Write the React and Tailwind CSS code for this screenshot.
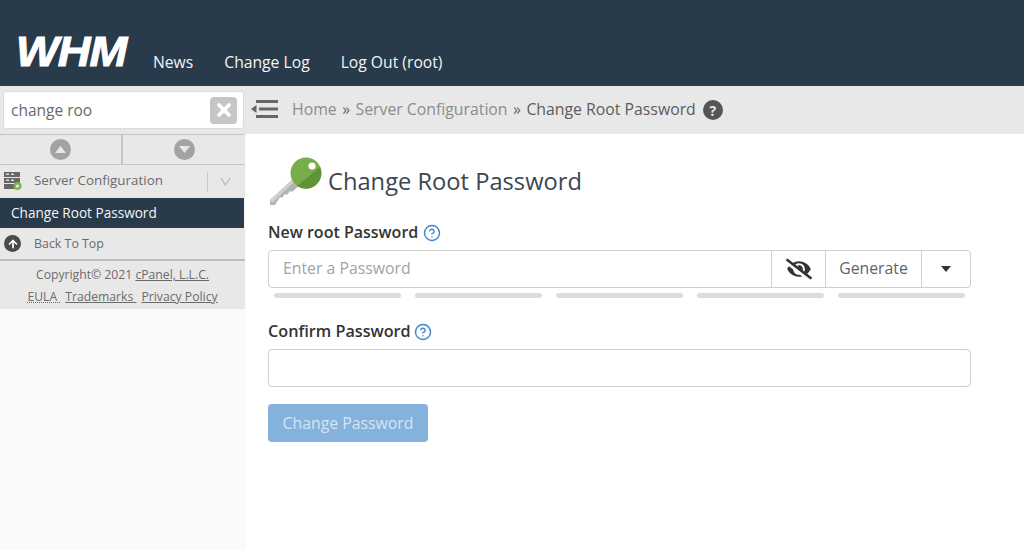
import React from 'react';
import { X, ArrowUp, HelpCircle } from 'lucide-react';
import { FaEyeSlash } from 'react-icons/fa';

const font = { fontFamily: '"Open Sans", "Liberation Sans", sans-serif' };

function KeyIcon() {
  return (
    <svg width="56" height="52" viewBox="0 0 56 52" className="shrink-0">
      <path d="M2 44 L26 22 L32 29 L24 36 L22 35 L19 39 L17 38 L14 42 L12 41 L7 49 L2 49 Z" fill="#b3b3b3" />
      <path d="M2 44 L26 22 L28 24 L4 47 Z" fill="#d0d0d0" />
      <circle cx="38" cy="17" r="15.5" fill="#78ad4c" />
      <path d="M52 11 A15.5 15.5 0 0 1 29 30 Z" fill="#5f9336" />
      <circle cx="44" cy="10" r="3.6" fill="#fff" />
    </svg>
  );
}

function ServerIcon() {
  return (
    <svg width="18" height="19" viewBox="0 0 18 19">
      <rect x="0" y="0" width="16" height="5" fill="#666" />
      <rect x="0" y="6" width="16" height="5" fill="#666" />
      <rect x="0" y="12" width="16" height="5" fill="#666" />
      <rect x="2" y="1.5" width="3" height="1.5" fill="#ddd" />
      <rect x="7" y="1.5" width="3" height="1.5" fill="#ddd" />
      <rect x="2" y="7.5" width="3" height="1.5" fill="#ddd" />
      <rect x="7" y="7.5" width="3" height="1.5" fill="#ddd" />
      <circle cx="13.5" cy="14" r="4" fill="#7ab648" />
      <circle cx="13.5" cy="14" r="1.6" fill="#e8e8e8" />
    </svg>
  );
}

function Triangle({ up }) {
  return (
    <span className="w-[21px] h-[21px] rounded-full bg-[#a3a3a3] flex items-center justify-center">
      <svg width="11" height="7" viewBox="0 0 11 7">
        <path d={up ? 'M5.5 0 L11 7 L0 7 Z' : 'M0 0 L11 0 L5.5 7 Z'} fill="#e8e8e8" />
      </svg>
    </span>
  );
}

function HelpDot() {
  return <HelpCircle size={18} strokeWidth={1.9} className="text-[#3d86cc]" />;
}

export default function App() {
  return (
    <div className="w-[1024px] h-[550px] overflow-hidden bg-white flex flex-col" style={font}>
      {/* top bar */}
      <header className="h-[86px] bg-[#293a4a] flex items-end pl-[16px] pb-[12px] text-white">
        <span className="font-['Liberation_Sans'] font-bold italic text-[42px] leading-[38px] tracking-[-1px] w-[116px] mb-[3px] scale-x-[1.08] origin-left [-webkit-text-stroke:1px_white]">WHM</span>
        <nav className="flex gap-[31px] ml-[21px] text-[15.7px] leading-[24px] text-[#f2f5f7]">
          <span>News</span>
          <span>Change Log</span>
          <span>Log Out (root)</span>
        </nav>
      </header>

      <div className="flex flex-1 min-h-0">
        {/* sidebar */}
        <aside className="w-[246px] shrink-0 bg-[#fafafa] flex flex-col">
          <div className="h-[48px] bg-[#e8e8e8] pl-[3px] pr-[2px] pt-[5px]">
            <div className="h-[38px] bg-white border border-[#dcdcdc] rounded-[3px] flex items-center justify-between pl-[7px] pr-[6px]">
              <span className="text-[15.5px] text-[#6a6a6a] pt-[1px]">change roo</span>
              <span className="w-[27px] h-[27px] rounded-[4px] bg-[#c6c6c6] flex items-center justify-center">
                <X size={20} strokeWidth={4.5} className="text-white" />
              </span>
            </div>
          </div>
          <div className="w-[245px] h-[31px] flex bg-[#e8e8e8] border-t border-b border-[#c4c4c4]">
            <div className="w-[123px] flex items-center justify-center border-r-2 border-[#c4c4c4]"><Triangle up /></div>
            <div className="flex-1 flex items-center justify-center"><Triangle /></div>
          </div>
          <div className="w-[245px] h-[33px] bg-[#e8e8e8] flex items-center pl-[4px] text-[13.4px] text-[#6b6b6b]">
            <ServerIcon />
            <span className="ml-[12px] w-[173px] pb-[2px]">Server Configuration</span>
            <span className="border-l border-[#c9c9c9] h-[20px] pl-[12px] flex items-center">
              <svg width="11" height="9" viewBox="0 0 11 9"><path d="M1 1 L5.5 8 L10 1" fill="none" stroke="#c4c4c4" strokeWidth="1.6" /></svg>
            </span>
          </div>
          <div className="w-[244px] h-[30px] bg-[#293a4a] text-[#f2f5f7] text-[13.6px] font-medium flex items-center pl-[11px] pt-[1px]">
            Change Root Password
          </div>
          <div className="w-[245px] h-[33px] bg-[#e8e8e8] border-b-2 border-[#bcbcbc] flex items-center pl-[4px] text-[12.4px] text-[#6b6b6b]">
            <span className="w-[17px] h-[17px] rounded-full bg-[#4a4a4a] flex items-center justify-center">
              <ArrowUp size={12} strokeWidth={3.5} className="text-white" />
            </span>
            <span className="ml-[13px] pt-[1px]">Back To Top</span>
          </div>
          <div className="w-[245px] h-[48px] bg-[#e8e8e8] text-[12.2px] text-[#6b6b6b] flex flex-col items-center pt-[3px] leading-[22px]">
            <div>Copyright© 2021 <span className="underline">cPanel, L.L.C.</span></div>
            <div className="flex gap-[5px]">
              <span className="underline decoration-dotted">EULA&nbsp;</span>
              <span className="underline">Trademarks&nbsp;</span>
              <span className="underline">Privacy Policy</span>
            </div>
          </div>
        </aside>

        {/* content */}
        <main className="flex-1 min-w-0">
          <div className="h-[48px] bg-[#e8e8e8] flex items-center pl-[5px] text-[15.8px]">
            <svg width="28" height="20" viewBox="0 0 28 20" className="mr-[13px] mb-[2px]">
              <rect x="5" y="1" width="22" height="3" fill="#666" />
              <rect x="8" y="8.5" width="19" height="3" fill="#666" />
              <rect x="5" y="16" width="22" height="3" fill="#666" />
              <path d="M0 10 L5.5 6 L5.5 14 Z" fill="#666" />
            </svg>
            <span className="text-[#8c8c8c]">Home</span>
            <span className="text-[#666] mx-[5.5px]">»</span>
            <span className="text-[#8c8c8c]">Server Configuration</span>
            <span className="text-[#666] mx-[5.5px]">»</span>
            <span className="text-[#5c5c5c]">Change Root Password</span>
            <span className="ml-[7px] w-[20px] h-[20px] rounded-full bg-[#555] text-[#e8e8e8] text-[14px] font-bold flex items-center justify-center">?</span>
          </div>

          <div className="pl-[22px] w-[725px]">
            <div className="flex items-center h-[52px] mt-[22px]">
              <KeyIcon />
              <h1 className="ml-[4px] text-[23.7px] leading-[32px] text-[#3c4650] -mt-[2px]">Change Root Password</h1>
            </div>

            <div className="mt-[13px] flex items-center gap-[5px] h-[24px] text-[16px] font-semibold text-[#333] leading-[22px]">
              <span className="pb-[2px]">New root Password</span> <HelpDot />
            </div>
            <div className="mt-[5px] h-[38px] border border-[#cfcfcf] rounded-[4px] flex text-[15.8px]">
              <div className="flex-1 flex items-center pl-[14px] text-[#a3a3a3]">Enter a Password</div>
              <div className="w-[54px] flex items-center justify-center border-l border-[#cfcfcf]">
                <FaEyeSlash size={26} className="text-[#333]" />
              </div>
              <div className="w-[96px] flex items-center justify-center border-l border-[#cfcfcf] text-[#5b6570]">Generate</div>
              <div className="w-[49px] flex items-center justify-center border-l border-[#cfcfcf]">
                <svg width="10" height="6" viewBox="0 0 10 6"><path d="M0 0 L10 0 L5 6 Z" fill="#333" /></svg>
              </div>
            </div>
            <div className="mt-[5px] px-[6px] grid grid-cols-5 gap-[14px]">
              {[0, 1, 2, 3, 4].map(i => (
                <div key={i} className="h-[5px] rounded-full bg-[#dcdcdc]" />
              ))}
            </div>

            <div className="mt-[22px] flex items-center gap-[3px] h-[24px] text-[16.2px] font-semibold text-[#333] leading-[22px]">
              <span className="pb-[2px]">Confirm Password</span> <HelpDot />
            </div>
            <div className="mt-[5px] h-[38px] border border-[#cfcfcf] rounded-[4px]" />

            <button className="mt-[17px] h-[38px] w-[160px] rounded-[4px] bg-[#85b2dd] text-[#d6e5f3] text-[15.8px] pt-[1px]">
              Change Password
            </button>
          </div>
        </main>
      </div>
    </div>
  );
}
